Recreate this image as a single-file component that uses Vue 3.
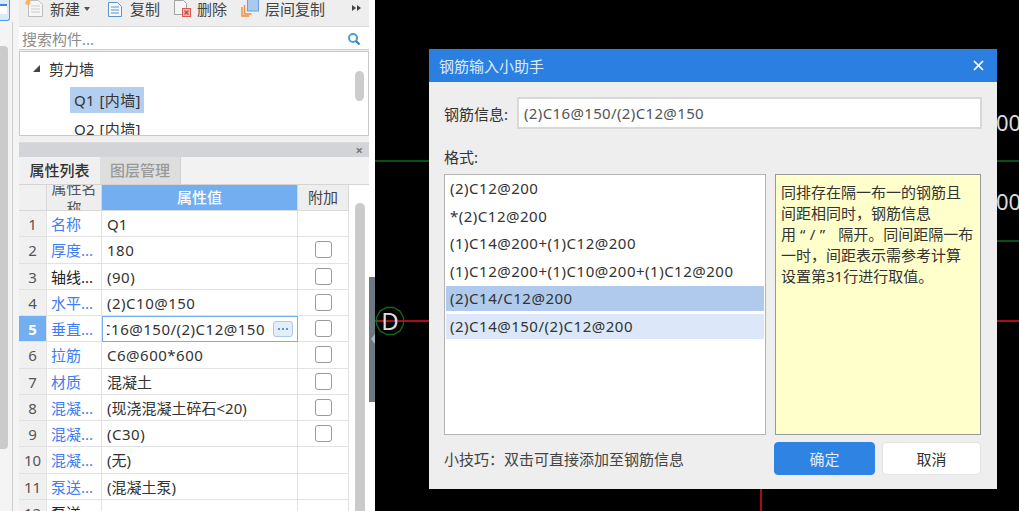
<script setup>
const rows = [
  { n: 1, name: '名称', value: 'Q1', link: true, check: false },
  { n: 2, name: '厚度...', value: '180', link: true, check: true, latin: true },
  { n: 3, name: '轴线...', value: '(90)', link: false, check: true, latin: true },
  { n: 4, name: '水平...', value: '(2)C10@150', link: true, check: true, latin: true },
  { n: 5, name: '垂直...', value: '', link: true, check: true, active: true },
  { n: 6, name: '拉筋', value: 'C6@600*600', link: true, check: true, latin: true },
  { n: 7, name: '材质', value: '混凝土', link: true, check: true },
  { n: 8, name: '混凝...', value: '(现浇混凝土碎石<20)', link: true, check: true },
  { n: 9, name: '混凝...', value: '(C30)', link: true, check: true, latin: true },
  { n: 10, name: '混凝...', value: '(无)', link: true, check: false },
  { n: 11, name: '泵送...', value: '(混凝土泵)', link: true, check: false },
  { n: 12, name: '泵送', value: '', link: false, check: false },
]
const formats = [
  { t: '(2)C12@200' },
  { t: '*(2)C12@200' },
  { t: '(1)C14@200+(1)C12@200' },
  { t: '(1)C12@200+(1)C10@200+(1)C12@200' },
  { t: '(2)C14/C12@200', cls: 'sel' },
  { t: '(2)C14@150/(2)C12@200', cls: 'hov' },
]
</script>

<template>
  <div class="screen">
    <aside class="strip">
      <div class="strip-btn"><span class="strip-icon"></span></div>
      <div class="strip-thumb"></div>
    </aside>

    <section class="panel">
      <div class="toolbar">
        <span class="tool tool-new">
          <svg width="20" height="18" viewBox="0 0 20 18"><path d="M3.500 .5h10l4 4v12h-14z" fill="#f6f6f6" stroke="#bdbdbd"/><path d="M6 6h9M6 9h9M6 12h9" stroke="#cacaca"/><circle cx="3" cy="2.500" r="2.500" fill="#f7b65a"/></svg>
          <span>新建</span><i class="caret"></i>
        </span>
        <span class="tool tool-copy">
          <svg width="16" height="18" viewBox="0 0 16 18"><path d="M1.500 2.500h9l4 4v10h-13z" fill="#f4f8fc" stroke="#5b94c6"/><path d="M4 7h8M4 10h8M4 13h8" stroke="#5b94c6"/></svg>
          <span>复制</span>
        </span>
        <span class="tool tool-del">
          <svg width="19" height="18" viewBox="0 0 19 18"><path d="M1.500 .5h9l3 3v11h-12z" fill="#f5f5f5" stroke="#a5a5a5"/><rect x="9.500" y="8.500" width="8" height="8" fill="#f4b9b4" stroke="#d9574e"/><path d="M11.500 10.500l4 4M15.500 10.500l-4 4" stroke="#d23c32" stroke-width="1.200"/></svg>
          <span>删除</span>
        </span>
        <span class="tool tool-layer">
          <svg width="19" height="18" viewBox="0 0 19 18"><path d="M1 7v9h7" fill="none" stroke="#ee8d3c" stroke-width="1.400"/><path d="M3.500 5v9h7" fill="none" stroke="#ee8d3c" stroke-width="1.400"/><rect x="6.500" y="-2" width="11" height="13" fill="#a9c9ee" stroke="#6a9ed8"/></svg>
          <span>层间复制</span>
        </span>
        <span class="more"><i></i><i></i></span>
      </div>

      <div class="search">
        <span class="search-text">搜索构件...</span>
        <svg width="14" height="14" viewBox="0 0 14 14"><circle cx="6" cy="6" r="4" fill="none" stroke="#4a9ed2" stroke-width="2"/><path d="M9 9l3.500 3.500" stroke="#3f7fb0" stroke-width="2.200"/></svg>
      </div>

      <div class="tree">
        <div class="tree-root"><i class="tree-arrow"></i><span>剪力墙</span></div>
        <div class="tree-item"><span class="tree-sel">Q1 [内墙]</span></div>
        <div class="tree-item"><span class="tree-plain">Q2 [内墙]</span></div>
        <div class="tree-thumb"></div>
      </div>

      <div class="title-bar"><span class="title-x">×</span></div>

      <div class="tabs">
        <span class="tab on">属性列表</span>
        <span class="tab">图层管理</span>
      </div>

      <div class="table-wrap">
        <div class="table">
          <div class="head idx"></div>
          <div class="head name-head"><span>属性名称</span></div>
          <div class="head val-head">属性值</div>
          <div class="head add-head">附加</div>
          <template v-for="r in rows" :key="r.n">
            <div class="cell idx" :class="{ 'idx-on': r.active }">{{ r.n }}</div>
            <div class="cell name" :class="{ link: r.link }">{{ r.name }}</div>
            <div v-if="r.active" class="cell value editing">
              <span class="edit-text"><span class="latin">(2)C16@150/(2)C12@150</span></span>
              <span class="dots"><i></i><i></i><i></i></span>
            </div>
            <div v-else class="cell value" :class="{ latin: r.latin }">{{ r.value }}</div>
            <div class="cell add"><i v-if="r.check" class="box"></i></div>
          </template>
        </div>
        <div class="table-thumb"></div>
      </div>
    </section>

    <div class="side-bar"><i class="side-arrow"></i></div>

    <main class="canvas">
      <i class="line green g1"></i>
      <i class="line green g2"></i>
      <i class="line red r1"></i>
      <i class="line red-v r2"></i>
      <span class="cad-num n1">00</span>
      <span class="cad-num n2">00</span>
      <svg class="axis" width="30" height="30" viewBox="0 0 30 30"><polygon points="28.500,11.400 28.500,18.600 24.900,24.900 18.600,28.500 11.400,28.500 5.100,24.900 1.500,18.600 1.500,11.400 5.100,5.100 11.400,1.500 18.600,1.500 24.900,5.100" fill="none" stroke="#0a6a18" stroke-width="1.300"/><text x="15" y="24" text-anchor="middle" class="axis-text">D</text></svg>

      <div class="dialog">
        <header class="dlg-head">
          <span>钢筋输入小助手</span>
          <svg width="11" height="11" viewBox="0 0 11 11"><path d="M1 1l9 9M10 1l-9 9" stroke="#fff" stroke-width="1.700"/></svg>
        </header>
        <div class="dlg-body">
          <div class="info-row">
            <label>钢筋信息:</label>
            <div class="info-input">(2)C16@150/(2)C12@150</div>
          </div>
          <div class="fmt-label">格式:</div>
          <div class="fmt-row">
            <ul class="fmt-list latin">
              <li v-for="f in formats" :key="f.t" :class="f.cls">{{ f.t }}</li>
            </ul>
            <div class="note">同排存在隔一布一的钢筋且<br>间距相同时，钢筋信息<br>用 <span class="quote">“/” </span>隔开。同间距隔一布<br>一时，间距表示需参考计算<br>设置第31行进行取值。</div>
          </div>
          <div class="dlg-foot">
            <span class="tip">小技巧：双击可直接添加至钢筋信息</span>
            <button class="btn primary">确定</button>
            <button class="btn">取消</button>
          </div>
        </div>
      </div>
    </main>
  </div>
</template>

<style>
html, body { margin: 0; background: #000; overflow: hidden; }
</style>

<style scoped>
.screen {
  width: 1019px; height: 511px; display: flex; overflow: hidden; background: #000;
  font-family: "Noto Sans", "Noto Sans CJK SC", sans-serif; font-size: 15px; color: #333;
}
.latin { letter-spacing: .5px; }
.strip { width: 19px; flex: none; background: #f4f4f4; position: relative; box-sizing: border-box; display: flex; flex-direction: column; }
.strip::after { content: ""; position: absolute; left: 12px; top: 22px; bottom: 0; width: 1px; background: #cfcfcf; }
.strip-btn { width: 10px; height: 21px; box-sizing: border-box; background: #dbe9f8; border: 1px solid #4f9ae6; border-left: 0; border-top: 0; border-radius: 0 0 3px 0; }
.strip-icon { display: block; width: 7px; height: 8px; margin-top: 4px; background: #fff; border-top: 2px solid #3f87d6; }
.strip-thumb { width: 8px; margin-top: 25px; height: 403px; background: #cbcbcb; border-radius: 0 4px 4px 0; }

.panel { width: 350px; flex: none; background: #f0f0f0; display: flex; flex-direction: column; height: 511px; overflow: hidden; }
.toolbar { height: 27px; flex: none; background: #eee; display: flex; align-items: center; padding-left: 6px; box-sizing: border-box; position: relative; color: #444; border-bottom: 1px solid #d8d8d8; }
.tool { display: inline-flex; align-items: center; height: 18px; margin-top: -8px; white-space: nowrap; line-height: 18px; }
.tool-new { width: 82px; gap: 5px; }
.tool-copy { width: 66px; gap: 7px; }
.tool-del { width: 68px; gap: 5px; }
.tool-layer { width: 100px; gap: 5px; }
.caret { width: 0; height: 0; border: 3px solid transparent; border-top: 4px solid #555; border-bottom: 0; margin-left: -1px; }
.more { position: absolute; right: 8px; top: 5px; display: flex; gap: 1px; }
.more i { width: 0; height: 0; border-left: 4px solid #444; border-top: 3.500px solid transparent; border-bottom: 3.500px solid transparent; }

.search { height: 23px; flex: none; background: #fff; display: flex; align-items: center; justify-content: space-between; padding: 1px 8px 0 3px; box-sizing: border-box; border-bottom: 1px solid #ccc; }
.search-text { color: #8c8c8c; }

.tree { height: 85px; flex: none; margin-top: 1px; box-sizing: border-box; background: #fff; border: 1px solid #c8c8c8; overflow: hidden; position: relative; }
.tree-root { height: 33px; display: flex; align-items: center; padding-left: 13px; color: #333; }
.tree-arrow { width: 0; height: 0; border-bottom: 7px solid #444; border-left: 7px solid transparent; margin-right: 9px; }
.tree-item { height: 29px; padding-left: 50px; display: flex; align-items: center; }
.tree-sel { background: #b3cfef; padding: 0 3px 0 4px; height: 26px; line-height: 26px; letter-spacing: .4px; }
.tree-plain { padding: 0 4px; letter-spacing: .4px; }
.tree-thumb { position: absolute; right: 4px; top: 19px; width: 9px; height: 30px; background: #ccc; border-radius: 5px; }

.title-bar { height: 15px; flex: none; margin-top: 6px; background: #d2d4d8; display: flex; justify-content: flex-end; align-items: center; border-top: 1px solid #dcdcdc; box-sizing: border-box; }
.title-x { font-size: 13px; line-height: 13px; color: #777; font-weight: 700; margin-right: 6px; }

.tabs { height: 28px; flex: none; display: flex; background: #f2f2f2; border-bottom: 1px solid #d4d4d4; box-sizing: border-box; }
.tab { width: 81px; text-align: center; line-height: 27px; background: #dedede; color: #999; font-weight: 500; border-right: 1px solid #cfcfcf; box-sizing: border-box; }
.tab.on { background: #f0f0f0; color: #333; border-right: 0; }

.table-wrap { flex: 1; display: flex; background: #fff; position: relative; min-height: 0; overflow: hidden; }
.table { width: 330px; flex: none; display: grid; grid-template-columns: 28px 55px 196px 51px; grid-template-rows: 26px repeat(12, 26.25px); align-content: start; }
.head { background: #eee; border-right: 1px solid #d8d8d8; border-bottom: 1px solid #d8d8d8; box-sizing: border-box; overflow: hidden; text-align: center; }
.name-head { display: flex; align-items: center; justify-content: center; line-height: 20px; color: #555; padding: 1px 4px 0; height: 26px; }
.val-head { background: #73aef0; color: #fff; line-height: 25px; font-weight: 500; }
.add-head { line-height: 25px; color: #444; }
.cell { box-sizing: border-box; border-right: 1px solid #e2e2e2; border-bottom: 1px solid #e2e2e2; line-height: 27px; white-space: nowrap; overflow: hidden; }
.idx { background: #f0f0f0; text-align: center; color: #555; }
.idx-on { background: #73aef0; color: #fff; font-weight: 700; }
.name { padding-left: 4px; color: #222; }
.link { color: #3f7df0; }
.value { padding-left: 5px; color: #333; }
.editing { display: flex; align-items: center; padding: 0 4px; border: 1px solid #73aef0; }
.edit-text { flex: 1; min-width: 0; display: flex; justify-content: flex-end; overflow: hidden; margin-right: 8px; }
.dots { width: 20px; height: 16px; flex: none; box-sizing: border-box; border: 1px solid #a9c9ee; border-radius: 3px; background: #e3eefb; display: flex; align-items: center; justify-content: center; gap: 2px; }
.dots i { width: 2px; height: 2px; background: #5a95d8; }
.add { display: flex; align-items: center; justify-content: center; }
.box { width: 17px; height: 17px; box-sizing: border-box; border: 1px solid #9a9a9a; border-radius: 3px; background: #fff; }
.table-thumb { position: absolute; left: 336px; top: 18px; bottom: 0; width: 10px; background: #cbcbcb; border-radius: 5px 5px 0 0; }

.side-bar { width: 6px; flex: none; background: #fff; position: relative; }
.side-bar::before { content: ""; position: absolute; left: 0; top: 277px; height: 125px; width: 6px; background: #6d7883; }
.side-arrow { position: absolute; left: 2px; top: 334px; width: 0; height: 0; border-right: 4px solid #b0b6bb; border-top: 5px solid transparent; border-bottom: 5px solid transparent; }

.canvas { flex: 1; position: relative; background: #000; overflow: hidden; }
.line { position: absolute; display: block; }
.green { left: 0; right: 0; height: 2px; background: #08500f; }
.g1 { top: 160px; }
.g2 { top: 240px; left: 622px; }
.red { left: 0; right: 0; top: 320px; height: 2px; background: #a80e18; }
.red-v { left: 385px; top: 480px; bottom: 0; width: 2px; background: #a80e18; }
.cad-num { position: absolute; left: 621px; color: #dcdcdc; font-size: 22px; line-height: 26px; font-family: "Noto Sans", sans-serif; }
.n1 { top: 109px; }
.n2 { top: 188px; }
.axis { position: absolute; left: 0; top: 306px; }
.axis-text { fill: #ddd; font-size: 24px; font-family: "Noto Sans", sans-serif; }

.dialog { position: absolute; left: 54px; top: 49px; width: 568px; height: 440px; background: #eee; display: flex; flex-direction: column; }
.dlg-head { height: 33px; flex: none; background: #2b7fe0; color: #dcebfb; display: flex; align-items: center; justify-content: space-between; padding: 0 13px 0 10px; }
.dlg-body { flex: 1; padding: 15px 15px 0 15px; display: flex; flex-direction: column; min-height: 0; }
.info-row { display: flex; align-items: center; height: 32px; }
.info-row label { width: 73px; flex: none; color: #333; }
.info-input { flex: 1; height: 32px; box-sizing: border-box; border: 2px solid #d8d8d8; background: #fff; line-height: 28px; padding-left: 2px; color: #555; letter-spacing: .36px; text-indent: 3px; }
.fmt-label { height: 20px; line-height: 20px; margin-top: 18px; color: #333; }
.fmt-row { display: flex; gap: 9px; margin-top: 7px; height: 261px; }
.fmt-list { width: 322px; flex: none; box-sizing: border-box; margin: 0; padding: 1px; list-style: none; background: #fff; border: 1px solid #b4b4b4; }
.fmt-list li { height: 25px; line-height: 25px; margin-bottom: 2.500px; padding-left: 4px; color: #333; }
.fmt-list .sel { background: #afcaec; }
.fmt-list .hov { background: #dce8f9; }
.note { width: 206px; flex: none; box-sizing: border-box; background: #ffffcc; border: 1px solid #999; padding: 7px 4px 0 5px; line-height: 21px; color: #333; white-space: nowrap; }
.quote { letter-spacing: 4.500px; }
.dlg-foot { display: flex; align-items: center; margin: 7px 1px 0 0; height: 33px; }
.tip { flex: 1; color: #444; }
.btn { width: 99px; height: 33px; box-sizing: border-box; border: 1px solid #e2e2e2; border-radius: 4px; background: #fff; color: #333; font: inherit; margin-left: 7px; padding: 0; }
.btn.primary { width: 101px; background: #2f84e3; color: #e2eefb; border-color: #2f84e3; margin-left: 0; }
</style>
